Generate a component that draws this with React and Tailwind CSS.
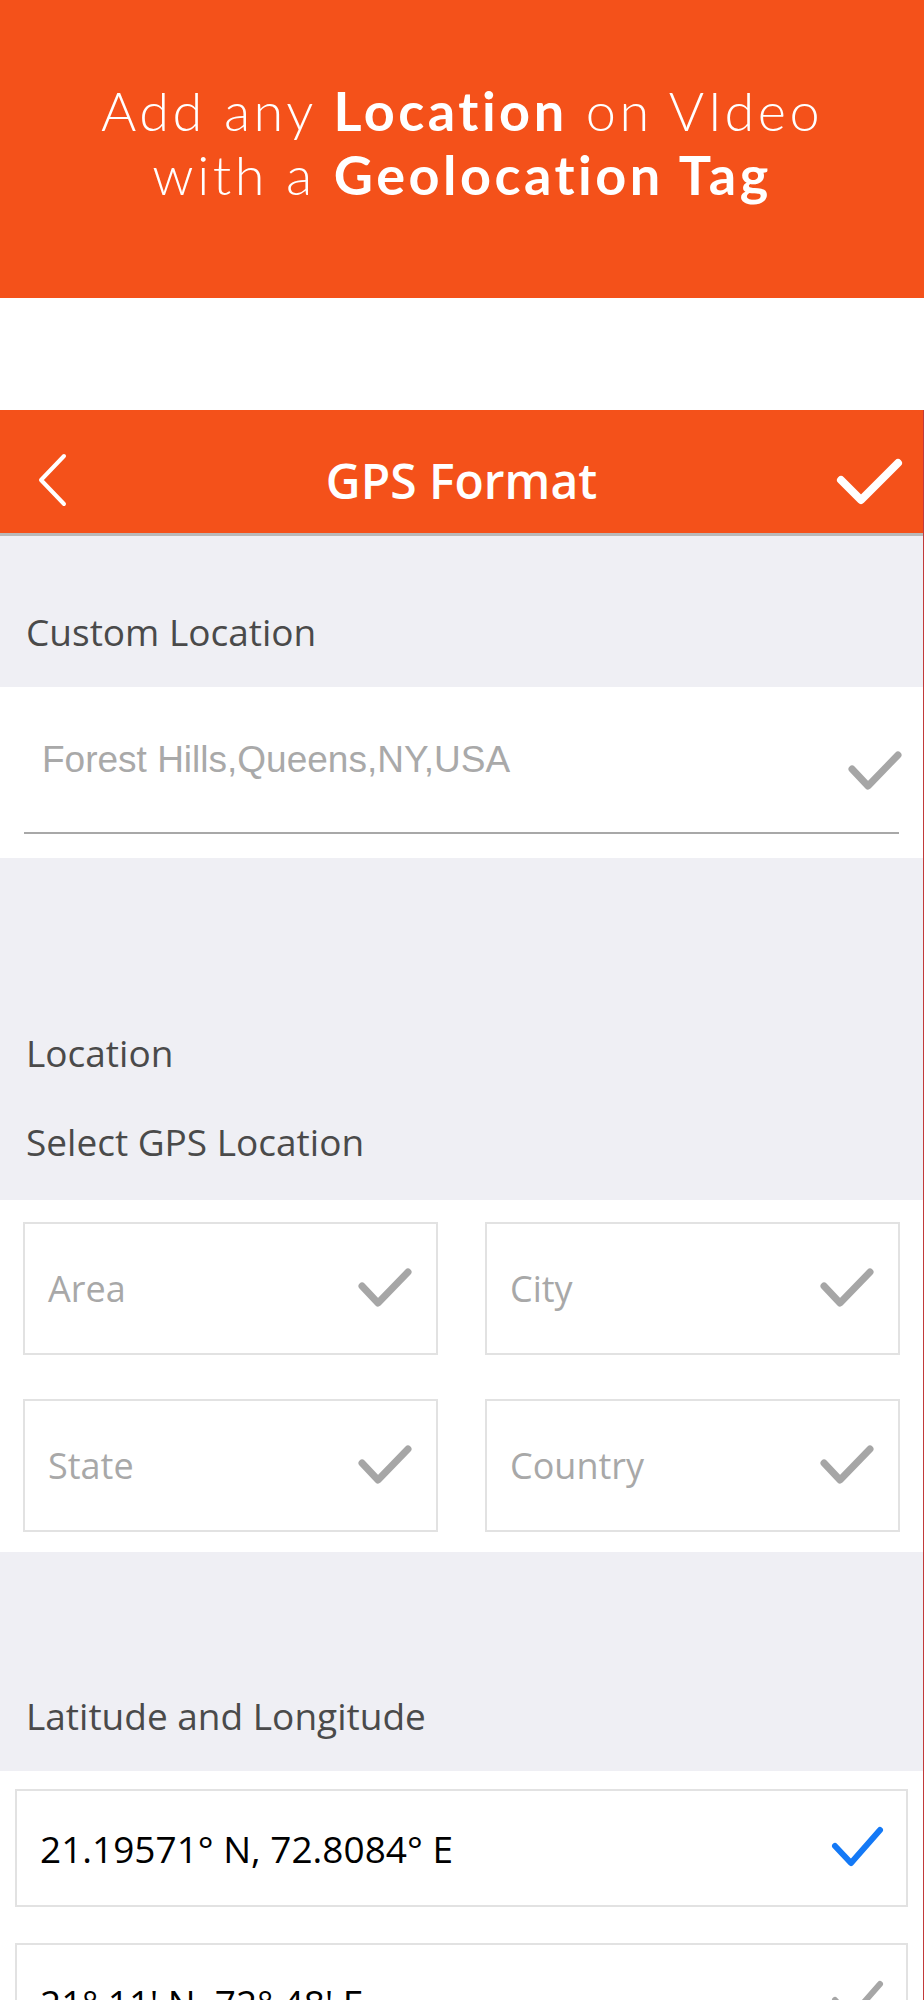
const ORANGE = 'bg-[#f4511a]'

function Check({ className, color, width = 6, pts, vb }) {
  return (
    <svg className={className} viewBox={vb} fill="none">
      <polyline
        points={pts}
        stroke={color}
        strokeWidth={width}
        strokeLinecap="round"
        strokeLinejoin="round"
      />
    </svg>
  )
}

function GrayCheck() {
  return (
    <Check
      className="w-[56px] h-[44px]"
      vb="0 0 56 44"
      color="#a6a6a6"
      width={7}
      pts="5,19 21,36 51,5"
    />
  )
}

function FieldBox({ label }) {
  return (
    <div className="h-[133px] border-2 border-[#e2e2e2] flex items-center pl-[23px] pr-[23px]">
      <span className="text-[36px] leading-[36px] text-[#a8a8a8] font-['Open_Sans',sans-serif]">{label}</span>
      <div className="ml-auto">
        <GrayCheck />
      </div>
    </div>
  )
}

function CoordRow({ text, active }) {
  return (
    <div className="h-[118px] border-2 border-[#e2e2e2] flex items-center pl-[23px] pr-[20px]">
      <span className="text-[37px] leading-[37px] text-black font-['Open_Sans',sans-serif]">{text}</span>
      <div className="ml-auto">
        {active ? (
          <Check className="w-[56px] h-[44px]" vb="0 0 56 44" color="#1479f6" width={6} pts="5,20 21,37 50,4" />
        ) : (
          <Check className="w-[56px] h-[44px]" vb="0 0 56 44" color="#a6a6a6" width={6} pts="5,20 21,37 50,4" />
        )}
      </div>
    </div>
  )
}

function SectionLabel({ children, className = '' }) {
  return (
    <div className={`pl-[26px] text-[37px] leading-[37px] text-[#4a4a4a] font-['Open_Sans',sans-serif] ${className}`}>
      {children}
    </div>
  )
}

export default function App() {
  return (
    <div className="w-[924px] min-h-[2000px] bg-white overflow-hidden">
      {/* promo banner */}
      <div className={`${ORANGE} h-[298px] pt-[79px] text-white text-center font-['Lato',sans-serif] font-light text-[54px] leading-[64px] tracking-[3.5px]`}>
        <div>
          Add any <span className="font-bold">Location</span> on VIdeo
        </div>
        <div>
          with a <span className="font-bold">Geolocation Tag</span>
        </div>
      </div>

      <div className="h-[112px] bg-white" />

      <div className="border-r border-[#c23a3a] bg-[#efeff4]">
        {/* nav bar */}
        <div className={`${ORANGE} h-[126px] pt-[18px] border-b-[3px] border-[#b9b9b9] flex items-center px-[18px]`}>
          <div className="w-[80px] flex items-center pl-[19px]">
            <svg className="w-[36px] h-[56px]" viewBox="0 0 36 56" fill="none">
              <polyline points="27,3 4,27 27,51" stroke="white" strokeWidth="4" strokeLinecap="round" strokeLinejoin="round" />
            </svg>
          </div>
          <div className="flex-1 text-center text-white text-[48px] leading-[48px] font-semibold font-['Open_Sans',sans-serif]">
            GPS Format
          </div>
          <div className="w-[80px] flex justify-end">
            <Check className="w-[70px] h-[52px]" vb="0 0 70 52" color="white" width={8} pts="6,25 26,45 63,8" />
          </div>
        </div>

        {/* custom location */}
        <div className="h-[151px] pt-[77px]">
          <SectionLabel>Custom Location</SectionLabel>
        </div>
        <div className="bg-white h-[171px] px-[24px]">
          <div className="h-[147px] border-b-2 border-[#a8a8a8] flex items-start">
            <span className="mt-[54px] pl-[18px] text-[37px] leading-[37px] text-[#a9a9a9] font-['Liberation_Sans',sans-serif]">
              Forest Hills,Queens,NY,USA
            </span>
            <div className="ml-auto mt-[63px] -mr-[4px]">
              <GrayCheck />
            </div>
          </div>
        </div>

        {/* gps location */}
        <div className="h-[342px] pt-[176px]">
          <SectionLabel>Location</SectionLabel>
          <SectionLabel className="mt-[52px]">Select GPS Location</SectionLabel>
        </div>
        <div className="bg-white pt-[22px] pb-[20px] pl-[23px]">
          <div className="grid grid-cols-[415px_415px] gap-x-[47px] gap-y-[44px]">
            <FieldBox label="Area" />
            <FieldBox label="City" />
            <FieldBox label="State" />
            <FieldBox label="Country" />
          </div>
        </div>

        {/* lat / long */}
        <div className="h-[219px] pt-[145px]">
          <SectionLabel>Latitude and Longitude</SectionLabel>
        </div>
        <div className="bg-white pt-[18px] pb-[40px] px-[15px] flex flex-col gap-[36px]">
          <CoordRow text="21.19571° N, 72.8084° E" active />
          <CoordRow text="21° 11' N, 72° 48' E" />
          <CoordRow text="N 21° 11' 44.56'', E 72° 48' 30.24''" />
        </div>
      </div>
    </div>
  )
}
